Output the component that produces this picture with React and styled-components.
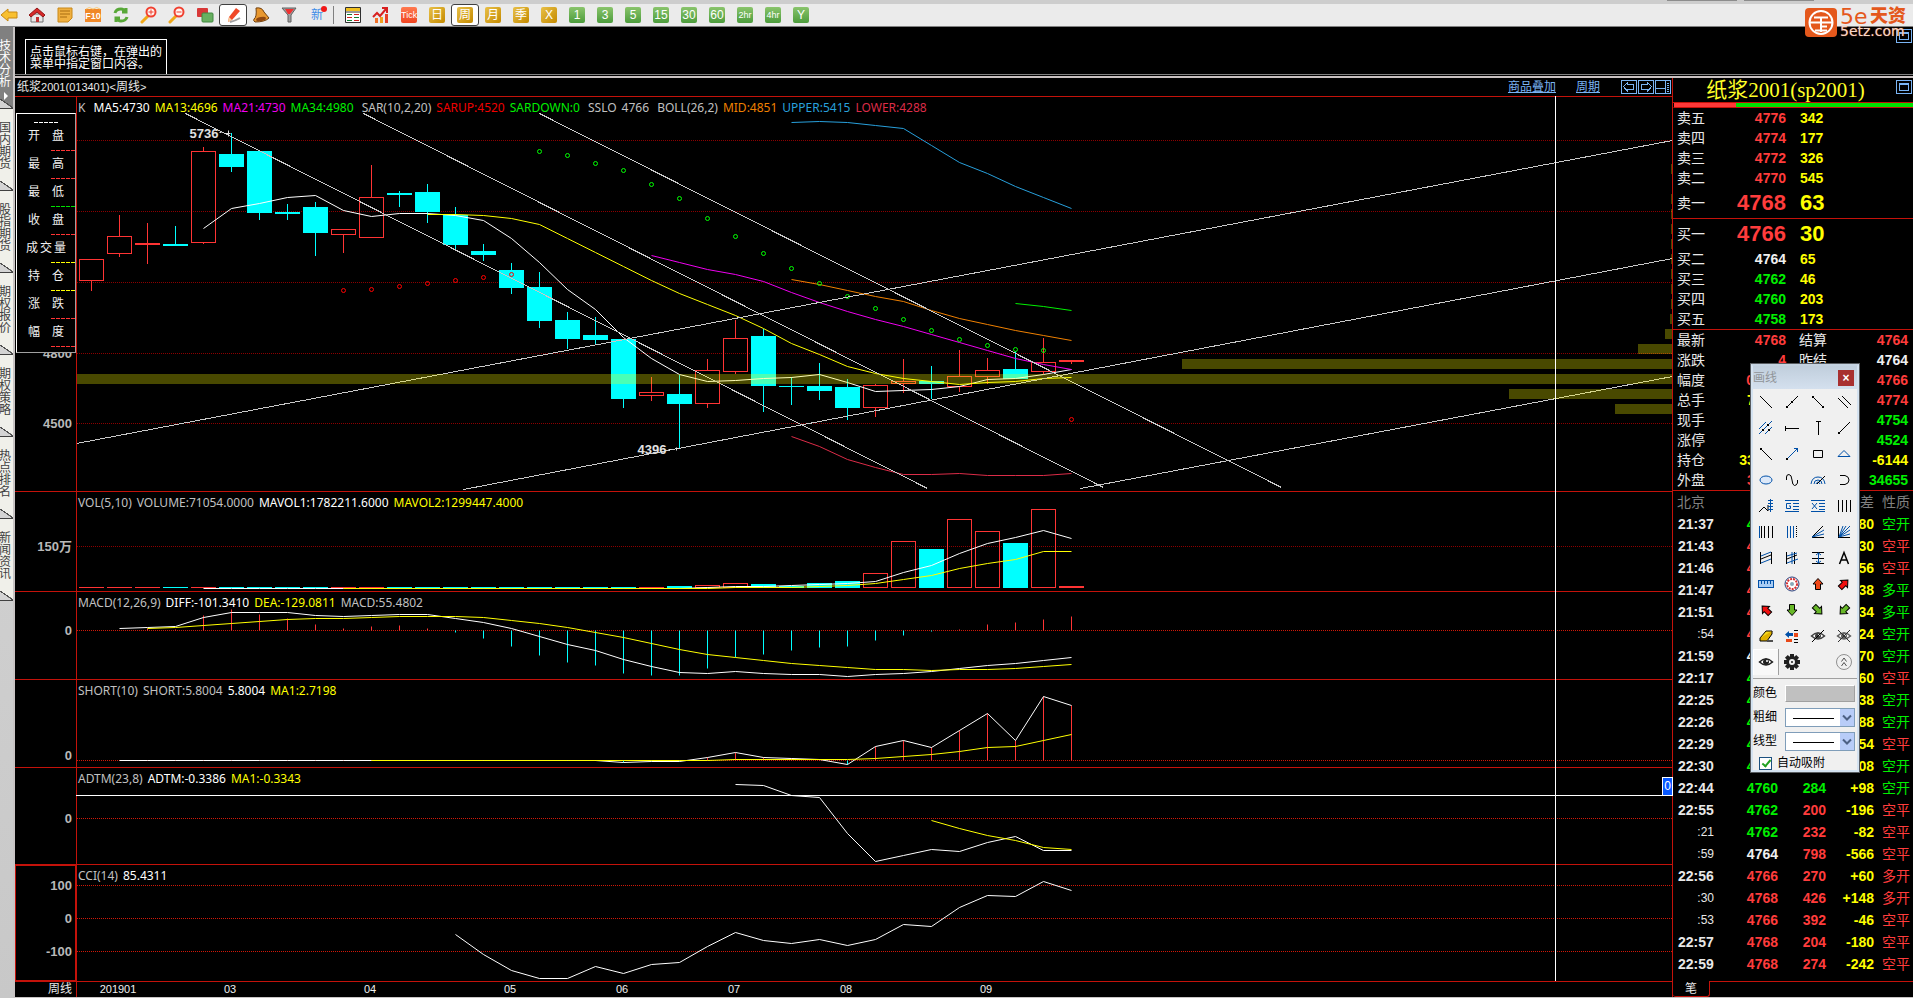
import React from 'react';
import styled, { createGlobalStyle, css } from 'styled-components';

const RED = '#c4120a';
const UP = '#ff3434';
const DOWN = '#00ffff';
const SANS = '"Liberation Sans", "Noto Sans CJK SC", sans-serif';
const LEGEND = '"Noto Sans", "Noto Sans CJK SC", sans-serif';

const Global = createGlobalStyle`
  * { box-sizing: border-box; }
  body { margin: 0; background: #000; color: #e8e8e8; font: 12px/12px ${SANS}; overflow: hidden; }
  button { font: inherit; color: inherit; border: 0; padding: 0; background: none; }
  table { border-collapse: collapse; border-spacing: 0; }
  td, th { padding: 0; font-weight: inherit; text-align: left; }
  svg { display: block; }
`;

/* ---------- frame ---------- */
const Page = styled.div`
  position: relative;
  display: flex;
  flex-direction: column;
  min-height: 100vh;
`;
const Strip = styled.div`
  height: 4px;
  display: flex;
  justify-content: flex-end;
  gap: 7px;
  padding-right: 99px;
  background: #cdcdcd;
`;
const StripTab = styled.i`
  width: 70px;
  height: 1px;
  background: #8c8c8c;
`;
const Toolbar = styled.div`
  display: flex;
  align-items: center;
  height: 23px;
  background: #ebebeb;
  border-bottom: 1px solid #808080;
`;
const Tools = styled.div`
  display: flex;
  align-items: center;
  margin-left: -5px;
`;
const Tool = styled.button`
  display: flex;
  align-items: center;
  justify-content: center;
  width: 28px;
  height: 22px;
  border-radius: 3px;
  ${p => p.$on && css`background: #fff; border: 1px solid #404040;`}
`;
const Divider = styled.i`
  width: 1px;
  height: 18px;
  margin: 0 5px 0 2px;
  background: #808080;
`;
const tones = {
  gold: 'linear-gradient(135deg, #e8c048, #c48a00)',
  green: 'linear-gradient(#8ac46c, #4c9c3c)',
  red: 'linear-gradient(#ff7a50, #f04420)',
};
const Chip = styled.span`
  width: 16px;
  height: 16px;
  border-radius: 2px;
  background: ${p => tones[p.$tone]};
  color: #fff;
  font-size: ${p => (p.$small ? 9 : 12)}px;
  line-height: 16px;
  text-align: center;
  overflow: hidden;
`;
const NewMark = styled.span`
  position: relative;
  color: #3c8ce8;
  font-size: 12px;
  line-height: 16px;
  &::after {
    content: '';
    position: absolute;
    top: -1px;
    right: -4px;
    width: 6px;
    height: 6px;
    border-radius: 50%;
    background: #f01818;
  }
`;

const Logo = styled.div`
  position: absolute;
  top: 8px;
  right: 6px;
  display: flex;
  gap: 3px;
  z-index: 2;
`;
const LogoText = styled.div`
  width: 67px;
  display: flex;
  flex-direction: column;
`;
const LogoTop = styled.div`
  display: flex;
  align-items: center;
  color: #e4581c;
  font-size: 18px;
  font-weight: 900;
  line-height: 17px;
  white-space: nowrap;
`;
const LogoFive = styled.span`
  width: 30px;
  font: 22px/17px "DejaVu Sans", sans-serif;
`;
const LogoUrl = styled.div`
  font: 14px/13px "DejaVu Sans", sans-serif;
  color: #f0d8cc;
  text-shadow: 0 0 1px #e4581c;
`;

const Body = styled.div`
  flex: 1;
  display: flex;
  min-width: 0;
`;
const Rail = styled.nav`
  width: 15px;
  border-right: 2px solid #c8c4c4;
  background: linear-gradient(#d8d8d8, #c8c8c8);
`;
const RailTab = styled.button`
  position: relative;
  display: flex;
  flex-direction: column;
  width: 13px;
  height: 82px;
  padding-top: 13px;
  overflow: hidden;
  background: ${p => (p.$on ? '#808080' : '#f0f0ea')};
  color: ${p => (p.$on ? '#fff' : '#404040')};
  &::after {
    content: '';
    position: absolute;
    left: 0;
    right: 0;
    bottom: 0;
    height: 9px;
    border-bottom: 1px solid #404040;
    background: linear-gradient(to top right, #d4d4d4 46%, #505050 47%, #505050 54%, transparent 55%);
  }
`;
const RailText = styled.span`
  width: 12px;
  margin-left: -1px;
  line-height: 12px;
  word-break: break-all;
`;
const RailArrow = styled.i`
  margin: 4px 0 0 4px;
  border: 4px solid transparent;
  border-left-color: #fff;
  border-right: 0;
`;

const Main = styled.main`
  flex: 1;
  min-width: 0;
  display: flex;
  flex-direction: column;
  border-bottom: 1px solid #c8c4c4;
`;
const HintBar = styled.div`
  display: flex;
  align-items: flex-end;
  justify-content: space-between;
  height: 48px;
  padding-left: 10px;
  border-bottom: 1px solid #808080;
`;
const Hint = styled.p`
  margin: 0;
  width: 142px;
  height: 35px;
  padding: 6px 4px 0;
  border: 1px solid #fff;
  border-bottom: 0;
  color: #fff;
  line-height: 12px;
`;
const CornerButton = styled.button`
  align-self: flex-start;
  margin: 2px 1px 0 0;
`;
const Ridge = styled.div`
  height: 3px;
  border-top: 1px solid #000;
  background: #c8c0c0;
`;
const Work = styled.div`
  flex: 1;
  display: flex;
  min-width: 0;
`;

/* ---------- chart column ---------- */
const ChartColumn = styled.section`
  position: relative;
  flex: 1;
  min-width: 0;
`;
const ChartHead = styled.header`
  display: flex;
  align-items: center;
  height: 19px;
  padding: 0 1px 1px 2px;
  border-bottom: 1px solid ${RED};
`;
const ChartName = styled.h1`
  flex: 1;
  margin: 0;
  font-size: 12px;
  font-weight: 400;
`;
const Small = styled.span`
  font-size: 11px;
`;
const HeadLink = styled.a`
  margin-right: 20px;
  color: #7ab4f4;
  line-height: 14px;
  text-decoration: underline;
  text-underline-offset: 1px;
`;
const HeadIcons = styled.div`
  display: flex;
  gap: 1px;
  margin-left: 1px;
`;
const Panel = styled.div`
  display: flex;
  border-bottom: 1px solid ${RED};
`;
const Axis = styled.div`
  position: relative;
  flex: none;
  width: 62px;
  border-right: 1px solid ${RED};
  ${p => p.$boxed && css`box-shadow: inset 0 0 0 1px ${RED};`}
`;
const Plot = styled.div`
  flex: 1;
  min-width: 0;
  display: grid;
  & > * { grid-area: 1 / 1; }
`;
const Legend = styled.div`
  display: flex;
  gap: 5px;
  height: 20px;
  padding: 3px 0 0 1px;
  font: 12px/15px ${LEGEND};
  white-space: pre;
`;
const Item = styled.span`
  color: ${p => p.$c || '#c0c0c0'};
`;
const Crosshair = styled.i`
  position: absolute;
  background: #fff;
  ${p => (p.$vertical
    ? css`top: 18px; bottom: 16px; right: 116px; width: 1px;`
    : css`left: 61px; right: 0; bottom: 201px; height: 1px;`)}
`;
const Flag = styled.span`
  position: absolute;
  right: -1px;
  bottom: 201px;
  width: 11px;
  height: 19px;
  border: 1px solid #fff;
  background: #0858ff;
  color: #fff;
  line-height: 17px;
  text-align: center;
`;
const Readout = styled.div`
  position: absolute;
  top: 16px;
  left: 1px;
  width: 60px;
  height: 240px;
  padding-top: 8px;
  border: 1px solid #fff;
  border-right-color: #a0a0a0;
  border-bottom-color: #a0a0a0;
  background: #000;
`;
const Dashes = styled.i`
  display: block;
  width: 24px;
  height: 1px;
  margin-left: ${p => (p.$first ? 17 : 34)}px;
  background: repeating-linear-gradient(90deg, ${p => p.$c} 0 4px, #000 4px 5px);
`;
const ReadRow = styled.div`
  height: 27px;
  padding: ${p => (p.$wide ? '7px 9px 0' : '7px 11px 0')};
  display: flex;
  justify-content: space-between;
  color: #f0f0f0;
`;

/* ---------- quote column ---------- */
const Side = styled.aside`
  flex: none;
  width: 241px;
  border-left: 1px solid ${RED};
  color: #e8e8e8;
  font-size: 14px;
`;
const SideHead = styled.header`
  display: flex;
  height: 25px;
  border-bottom: 1px solid ${RED};
  justify-content: flex-end;
`;
const SideTitle = styled.h2`
  flex: 1;
  margin: 0;
  padding-left: 2px;
  color: #ffff28;
  font: 400 21px/25px "Liberation Serif", "Noto Sans CJK SC", serif;
  text-align: center;
  white-space: nowrap;
`;
const Ratio = styled.div`
  height: 5px;
  margin: 0;
  border-left: 1px solid #000;
  border-bottom: 1px solid ${RED};
  background: linear-gradient(90deg, #ff3838 26%, #00e000 26%);
`;
const Book = styled.table`
  width: 100%;
  table-layout: fixed;
  border-bottom: 1px solid ${RED};
  border-collapse: separate;
`;
const BookRow = styled.tr`
  height: ${p => (p.$big ? 30 : 20)}px;
  td { font-size: ${p => (p.$big ? 22 : 14)}px; }
`;
const Label = styled.th`
  width: ${p => p.$w}px;
  padding-left: 4px;
  font-weight: 400;
  line-height: 18px;
  color: ${p => (p.$dim ? '#808080' : '#e8e8e8')};
`;
const Num = styled.td`
  width: ${p => p.$w}px;
  padding-left: ${p => p.$pad || 0}px;
  color: ${p => p.$c};
  font-weight: 700;
  line-height: 18px;
  text-align: ${p => (p.$left ? 'left' : 'right')};
`;
const TickRow = styled.tr`
  height: 22px;
`;
const Time = styled.td`
  width: 41px;
  padding-left: ${p => (p.$minor ? 0 : 5)}px;
  font-size: ${p => (p.$minor ? 12 : 14)}px;
  font-weight: ${p => (p.$minor ? 400 : 700)};
  text-align: ${p => (p.$minor ? 'right' : 'left')};
`;
const Nature = styled.td`
  padding-left: 8px;
  color: ${p => p.$c};
  line-height: 18px;
`;
const SideFoot = styled.div`
  display: flex;
  height: 15px;
  margin-top: 6px;
`;
const FootTab = styled.button`
  width: 37px;
  height: 16px;
  border: 1px solid ${RED};
  border-top: 0;
  border-left: 0;
  border-radius: 0 0 3px 3px;
  font-size: 12px;
`;
const FootRest = styled.i`
  flex: 1;
  border-top: 1px solid ${RED};
`;

/* ---------- drawing palette window ---------- */
const Palette = styled.div`
  position: absolute;
  top: 363px;
  right: 53px;
  width: 110px;
  z-index: 3;
  border: 1px solid #585c60;
  color: #000;
`;
const PaletteInner = styled.div`
  border: 2px solid #d4e2f0;
  border-top-color: #c4d2e0;
  background: #f0f0f0;
`;
const PaletteTitle = styled.div`
  display: flex;
  align-items: center;
  justify-content: space-between;
  height: 23px;
  padding-right: 3px;
  background: linear-gradient(#c0cedc, #d4e0ee);
  color: #909498;
`;
const Close = styled.button`
  width: 16px;
  height: 16px;
  background: #a83030;
  color: #fff;
  font-size: 12px;
  font-weight: 700;
  line-height: 14px;
`;
const PaletteGrid = styled.div`
  display: grid;
  grid-template-columns: repeat(4, 26px);
  grid-auto-rows: 26px;
`;
const PaletteCell = styled.button`
  display: flex;
  align-items: center;
  justify-content: center;
  ${p => p.$on && css`box-shadow: inset -1px 0 #a0a0a0, inset 1px 1px #fff; background: #f8f8f8;`}
`;
const Settings = styled.div`
  margin-top: 3px;
  padding-top: 2px;
  border-top: 1px solid #a0a0a0;
`;
const Setting = styled.label`
  display: flex;
  align-items: center;
  justify-content: space-between;
  height: 24px;
  padding-right: 2px;
`;
const Swatch = styled.button`
  width: 70px;
  height: 17px;
  border: 1px solid #a0a0a0;
  border-top-color: #fff;
  border-left-color: #fff;
  background: #c0c0c0;
`;
const LineSelect = styled.select`
  appearance: none;
  display: block;
  width: 70px;
  height: 19px;
  border: 1px solid #7f9db9;
  border-radius: 0;
  background:
    linear-gradient(#000, #000) 7px 9px / 41px 1px no-repeat,
    linear-gradient(90deg, #fff 54px, #b8ccf8 54px);
`;
const SelectBox = styled.span`
  position: relative;
  display: block;
  svg { position: absolute; right: 3px; top: 6px; pointer-events: none; }
`;
const Snap = styled.label`
  display: flex;
  align-items: center;
  gap: 5px;
  height: 17px;
  padding: 3px 0 0 6px;
`;
const Check = styled.input`
  appearance: none;
  width: 13px;
  height: 13px;
  margin: 0;
  border: 1px solid #1c5180;
  background: #fff;
  &:checked::after {
    content: '';
    display: block;
    width: 3px;
    height: 7px;
    margin: 0 0 0 4px;
    border: solid #21a121;
    border-width: 0 2px 2px 0;
    transform: rotate(40deg);
  }
`;

/* ---------- series ---------- */
const X0 = 91;
const STEP = 28;
const xAt = i => X0 + STEP * i;
const line = (start, ys) => ys.map((y, i) => `${xAt(start + i)},${y}`).join(' ');

// high, body top, body bottom, low, rising
const CANDLES = [
  [259, 259, 280, 290, 1], [214, 236, 253, 256, 1], [222, 243, 244, 263, 1], [225, 244, 245, 245, 0],
  [146, 151, 242, 243, 1], [132, 154, 166, 171, 0], [151, 151, 212, 219, 0], [203, 212, 213, 219, 0],
  [201, 207, 232, 255, 0], [228, 229, 234, 252, 1], [164, 197, 237, 237, 1], [190, 193, 194, 206, 0],
  [183, 192, 211, 222, 0], [206, 215, 244, 248, 0], [243, 251, 254, 260, 0], [262, 270, 287, 293, 0],
  [271, 287, 320, 327, 0], [311, 320, 338, 348, 0], [316, 335, 339, 344, 0], [339, 339, 398, 407, 0],
  [376, 392, 395, 400, 1], [374, 394, 403, 447, 0], [358, 370, 403, 407, 1], [319, 338, 371, 373, 1],
  [328, 336, 385, 411, 0], [376, 386, 386, 404, 0], [362, 386, 390, 399, 0], [378, 387, 407, 419, 0],
  [383, 385, 407, 416, 1], [358, 381, 383, 392, 1], [365, 381, 383, 398, 0], [349, 376, 386, 391, 1],
  [357, 370, 376, 383, 1], [350, 369, 378, 378, 0], [337, 362, 371, 373, 1], [359, 360, 361, 363, 1],
];
const MA5 = line(4, [228, 208, 203, 197, 195, 210, 216, 213, 213, 215, 220, 238, 262, 289, 309, 337, 358, 374, 381, 380, 378, 377, 374, 382, 391, 390, 389, 386, 379, 378, 374, 369]);
const MA13 = line(12, [214, 214, 215, 218, 224, 238, 252, 266, 280, 293, 304, 315, 328, 343, 354, 366, 373, 378, 381, 384, 382, 381, 378, 377]);
const MA21 = line(20, [255, 262, 269, 274, 281, 292, 302, 311, 319, 326, 334, 342, 350, 358, 364, 369]);
const MA34 = line(33, [303, 306, 310]);
const UPPER = line(25, [122, 121, 122, 125, 128, 145, 162, 173, 186, 197, 208]);
const MID = line(25, [279, 284, 290, 296, 301, 310, 318, 324, 330, 335, 340]);
const LOWER = line(25, [436, 446, 459, 467, 474, 474, 473, 475, 475, 475, 473]);
const SAR_UP = [290, 289, 286, 283, 280, 277, 274];
const SAR_DOWN = [151, 155, 163, 170, 184, 198, 218, 236, 253, 268, 283, 296, 308, 319, 330, 339, 345, 349, 350];
const TRENDS = [
  [185, 113, 927, 488], [363, 113, 1103, 487], [539, 113, 1281, 487],
  [76, 443, 1672, 140], [463, 489, 1672, 258], [1080, 488, 1672, 376],
];
// top edge, length measured from the right border
const PROFILE = [
  [164, 1], [194, 1], [209, 1], [224, 1], [239, 1], [254, 1], [269, 1], [284, 1], [299, 1],
  [314, 2], [329, 7], [344, 34], [359, 490], [389, 163], [404, 57],
];
const VOL_TOP = { 21: 586, 22: 585, 23: 583, 24: 584, 25: 586, 26: 583, 27: 581, 28: 573, 29: 541, 30: 549, 31: 519, 32: 531, 33: 543, 34: 509, 35: 586 };
const flat = (n, y) => Array(n).fill(y);
const MAVOL1 = line(4, [...flat(18, 588), 587, 586, 586, 585, 584, 583, 581, 572, 565, 553, 543, 537, 530, 538]);
const MAVOL2 = line(9, [...flat(14, 588), 587, 587, 587, 586, 585, 583, 579, 575, 568, 563, 559, 551, 551]);
const DIFF = line(1, [628, 627, 626, 617, 612, 612, 612, 615, 616, 615, 614, 614, 618, 622, 628, 636, 644, 650, 659, 666, 672, 673, 671, 673, 674, 674, 676, 674, 673, 671, 668, 665, 663, 660, 657]);
const DEA = line(2, [628, 627, 625, 623, 621, 619, 618, 618, 617, 616, 616, 616, 617, 620, 623, 627, 632, 637, 643, 649, 654, 657, 660, 663, 665, 667, 669, 669, 670, 669, 669, 668, 666, 664]);
const MACD = [628, 629, 615, 609, 614, 618, 624, 628, 626, 625, 628, 632, 638, 646, 655, 662, 665, 673, 675, 675, 668, 657, 654, 650, 647, 646, 640, 635, 631, 629, 624, 622, 619, 616];
const SHORT_Y = [...flat(18, 760), 762, 761, 761, 757, 752, 757, 758, 759, 764, 746, 740, 747, 730, 713, 740, 696, 705];
const SHORT_MA = line(10, [...flat(13, 760), 759, 759, 759, 759, 759, 758, 756, 754, 751, 747, 746, 740, 734]);
const ADTM = line(23, [784, 785, 795, 797, 833, 861, 855, 849, 851, 842, 836, 850, 850]);
const ADTM_MA = line(30, [820, 828, 835, 840, 847, 849]);
const CCI = line(13, [934, 954, 970, 978, 978, 966, 973, 964, 962, 946, 932, 940, 943, 939, 945, 939, 924, 926, 907, 895, 896, 881, 890]);
const MONTHS = [['201901', 118], ['03', 230], ['04', 370], ['05', 510], ['06', 622], ['07', 734], ['08', 846], ['09', 986]];

const PLOT_LEFT = 77;

const Line = ({ points, c }) => <polyline points={points} fill="none" stroke={c} strokeWidth="1" />;
const Grid = ({ ys, top, c = '#8c0000' }) => ys.map(y => (
  <line key={y} x1="0" x2="100%" y1={y - top + 0.5} y2={y - top + 0.5} stroke={c} strokeDasharray="1 1" shapeRendering="crispEdges" />
));

function ChartPanel({ top, height, ticks = [], boxed, grid, gridColor, legend, under, children, readout }) {
  return (
    <Panel>
      <Axis $boxed={boxed}>
        <svg width="61" height={height}>
          {ticks.map(([t, y]) => (
            <text key={t} x="57" y={y - top + 5} textAnchor="end" fontSize="13" fontWeight="700" fill="#b8b8b8">{t}</text>
          ))}
        </svg>
        {readout}
      </Axis>
      <Plot>
        <svg width="100%" height={height}>
          <Grid ys={grid} top={top} c={gridColor} />
          <g transform={`translate(${0.5 - PLOT_LEFT} ${0.5 - top})`}>{children}</g>
          {under}
        </svg>
        <Legend>{legend.map(([t, c], i) => <Item key={i} $c={c}>{t}</Item>)}</Legend>
      </Plot>
    </Panel>
  );
}

const bodyFor = (i, y1, y2, up) => (
  <rect x={xAt(i) - 12} y={y1} width="24" height={y2 - y1 || 0.01} stroke={up ? UP : DOWN} fill={up ? (y2 - y1 < 2 ? UP : 'none') : DOWN} />
);

function Candles() {
  return (
    <g shapeRendering="crispEdges">
      {CANDLES.map(([h, t, b, l, up], i) => (
        <g key={i}>
          <path d={up && b - t > 1 ? `M${xAt(i)} ${h}V${t}M${xAt(i)} ${b}V${l}` : `M${xAt(i)} ${h}V${l}`} stroke={up ? UP : DOWN} />
          {bodyFor(i, t, b, up)}
        </g>
      ))}
    </g>
  );
}

const READ_ROWS = [
  ['开盘', UP], ['最高', UP], ['最低', '#00e000'], ['收盘', UP],
  ['成交量', '#ffff00'], ['持仓', '#ffff00'], ['涨跌', UP], ['幅度', UP],
];

function PriceReadout() {
  return (
    <Readout>
      <Dashes $first $c="#fff" />
      {READ_ROWS.map(([t, c]) => (
        <React.Fragment key={t}>
          <ReadRow $wide={t.length > 2}>{[...t].map(ch => <span key={ch}>{ch}</span>)}</ReadRow>
          <Dashes $c={c} />
        </React.Fragment>
      ))}
    </Readout>
  );
}

const K_LEGEND = [
  ['K '], ['MA5:4730', '#fff'], ['MA13:4696', '#ffff00'], ['MA21:4730', '#f000f0'], ['MA34:4980', '#00f000'],
  [' SAR(10,2,20)'], ['SARUP:4520', '#f00000'], ['SARDOWN:0', '#00f000'], [' SSLO'], ['4766'],
  [' BOLL(26,2)'], ['MID:4851', '#f08000'], ['UPPER:5415', '#28a0dc'], ['LOWER:4288', '#dc2c48'],
];

function HeadIcon({ d, label }) {
  return (
    <button aria-label={label}>
      <svg width="16" height="14" fill="none" stroke="#7ab4f4" shapeRendering="crispEdges">
        <path d={`M.5.5h15v13h-15z${d}`} />
      </svg>
    </button>
  );
}

function Charts() {
  return (
    <ChartColumn>
      <ChartHead>
        <ChartName>纸浆<Small>2001(013401)&lt;</Small>周线<Small>&gt;</Small></ChartName>
        <HeadLink href="#overlay">商品叠加</HeadLink>
        <HeadLink href="#period">周期</HeadLink>
        <HeadIcons>
          <HeadIcon label="左移" d="M2.500 6.500l4-4v2h6v5h-6v2l-4-5" />
          <HeadIcon label="右移" d="M13.500 6.500l-4-4v2h-6v5h6v2l4-5" />
          <HeadIcon label="布局" d="M10.500 1v12M1 8.500h9M12 3.500h2M12 5.500h2M12 7.500h2M12 9.500h2M12 11.500h2" />
        </HeadIcons>
      </ChartHead>

      <ChartPanel
        top={97} height={394} grid={[140, 211, 282, 353, 423]}
        ticks={[['4800', 353], ['4500', 423]]}
        legend={K_LEGEND} readout={<PriceReadout />}
        under={(
          <g fill="#ffff00" fillOpacity=".285">
            <rect x="0" y={374 - 97} width="100%" height="10" />
            <svg x="100%" overflow="visible">
              {PROFILE.map(([y, w]) => <rect key={y} x={-w} y={y - 97} width={w} height="10" />)}
            </svg>
          </g>
        )}
      >
        <Candles />
        <Line points={MA5} c="#fff" />
        <Line points={MA13} c="#ffff00" />
        <Line points={MA21} c="#f000f0" />
        <Line points={MA34} c="#00f000" />
        <Line points={UPPER} c="#28a0dc" />
        <Line points={MID} c="#f08000" />
        <Line points={LOWER} c="#dc2c48" />
        {SAR_UP.map((y, i) => <circle key={i} cx={xAt(9 + i)} cy={y} r="2" fill="none" stroke="#ff0000" />)}
        <circle cx={xAt(35)} cy="419" r="2" fill="none" stroke="#ff0000" />
        {SAR_DOWN.map((y, i) => <circle key={i} cx={xAt(16 + i)} cy={y} r="2" fill="none" stroke="#00ff00" />)}
        <g stroke="#c8c8c8" shapeRendering="crispEdges">
          {TRENDS.map(([x1, y1, x2, y2]) => <line key={x1} x1={x1} y1={y1} x2={x2} y2={y2} />)}
        </g>
        <g fill="#e0e0e0" fontSize="13" fontWeight="700">
          <text x="189" y="137">5736</text>
          <text x="637" y="453">4396</text>
        </g>
        <path d="M219 132h2M224 133h6M228 130v6M668 449h3M675 448h4M676 447v3" stroke="#e0e0e0" />
      </ChartPanel>

      <ChartPanel
        top={492} height={99} grid={[546]} ticks={[['150万', 546]]}
        legend={[['VOL(5,10)'], ['VOLUME:71054.0000'], ['MAVOL1:1782211.6000', '#fff'], ['MAVOL2:1299447.4000', '#ffff00']]}
      >
        <g shapeRendering="crispEdges">
          {CANDLES.map((c, i) => <React.Fragment key={i}>{bodyFor(i, VOL_TOP[i] || 587, 587, c[4])}</React.Fragment>)}
        </g>
        <Line points={MAVOL1} c="#fff" />
        <Line points={MAVOL2} c="#ffff00" />
      </ChartPanel>

      <ChartPanel
        top={592} height={87} grid={[630]} gridColor="#d01808" ticks={[['0', 630]]}
        legend={[['MACD(12,26,9)'], ['DIFF:-101.3410', '#fff'], ['DEA:-129.0811', '#ffff00'], ['MACD:55.4802']]}
      >
        {MACD.map((y, i) => (
          <line key={i} x1={xAt(i + 2)} x2={xAt(i + 2)} y1="630" y2={y} stroke={y < 630 ? UP : DOWN} />
        ))}
        <Line points={DIFF} c="#fff" />
        <Line points={DEA} c="#ffff00" />
      </ChartPanel>

      <ChartPanel
        top={680} height={87} grid={[760]} gridColor="#d01808" ticks={[['0', 755]]}
        legend={[['SHORT(10)'], ['SHORT:5.8004'], ['5.8004', '#fff'], ['MA1:2.7198', '#ffff00']]}
      >
        {SHORT_Y.map((y, i) => y !== 760 && (
          <line key={i} x1={xAt(i + 1)} x2={xAt(i + 1)} y1="760" y2={y} stroke={y < 760 ? UP : DOWN} />
        ))}
        <Line points={line(1, SHORT_Y)} c="#fff" />
        <Line points={SHORT_MA} c="#ffff00" />
      </ChartPanel>

      <ChartPanel
        top={768} height={96} grid={[818]} gridColor="#d01808" ticks={[['0', 818]]}
        legend={[['ADTM(23,8)'], ['ADTM:-0.3386', '#fff'], ['MA1:-0.3343', '#ffff00']]}
      >
        <Line points={ADTM} c="#fff" />
        <Line points={ADTM_MA} c="#ffff00" />
      </ChartPanel>

      <ChartPanel
        top={865} height={116} boxed grid={[885, 918, 951]} gridColor="#d01808"
        ticks={[['100', 885], ['0', 918], ['-100', 951]]}
        legend={[['CCI(14)'], ['85.4311', '#fff']]}
      >
        <Line points={CCI} c="#fff" />
      </ChartPanel>

      <DateAxis />
      <Crosshair $vertical />
      <Crosshair />
      <Flag>0</Flag>
    </ChartColumn>
  );
}

const DateRow = styled.div`
  display: flex;
  height: 15px;
`;
const DateUnit = styled.span`
  width: 62px;
  padding-right: 4px;
  border-right: 1px solid ${RED};
  line-height: 15px;
  text-align: right;
`;
const DateScale = styled.svg`
  flex: 1;
  min-width: 0;
  height: 15px;
`;
function DateAxis() {
  return (
    <DateRow>
      <DateUnit>周线</DateUnit>
      <DateScale fill="#f0f0f0" fontSize="11">
        {MONTHS.map(([t, x]) => <text key={t} x={x - PLOT_LEFT} y="11" textAnchor="middle">{t}</text>)}
      </DateScale>
    </DateRow>
  );
}

/* ---------- quotes ---------- */
const R = '#ff3c3c';
const G = '#00f000';
const Y = '#ffff00';
const W = '#f0f0f0';
const ASKS = [['卖五', '4776', '342', R], ['卖四', '4774', '177', R], ['卖三', '4772', '326', R], ['卖二', '4770', '545', R], ['卖一', '4768', '63', R, 1]];
const BIDS = [['买一', '4766', '30', R, 1], ['买二', '4764', '65', W], ['买三', '4762', '46', G], ['买四', '4760', '203', G], ['买五', '4758', '173', G]];
const STATS = [
  ['最新', '4768', R, '结算', '4764', R], ['涨跌', '4', R, '昨结', '4764', W],
  ['幅度', '0.08%', R, '开盘', '4766', R], ['总手', '71054', Y, '最高', '4774', R],
  ['现手', '274', Y, '最低', '4754', G], ['涨停', '5004', R, '跌停', '4524', G],
  ['持仓', '335678', Y, '仓差', '-6144', Y], ['外盘', '36399', R, '内盘', '34655', G],
];
const TICKS = [
  ['21:37', '4760', G, '', G, '80', '空开', G], ['21:43', '4766', R, '', R, '30', '空平', R],
  ['21:46', '4766', R, '', R, '56', '空平', R], ['21:47', '4766', R, '', R, '38', '多平', G],
  ['21:51', '4766', R, '', R, '34', '多平', G], [':54', '4766', R, '', R, '24', '空开', G],
  ['21:59', '4764', W, '', G, '70', '空开', G], ['22:17', '4762', G, '', R, '60', '空平', R],
  ['22:25', '4760', G, '', G, '38', '空开', G], ['22:26', '4760', G, '', G, '88', '空开', G],
  ['22:29', '4762', G, '', R, '54', '空平', R], ['22:30', '4760', G, '', G, '08', '空开', G],
  ['22:44', '4760', G, '284', G, '+98', '空开', G], ['22:55', '4762', G, '200', R, '-196', '空平', R],
  [':21', '4762', G, '232', R, '-82', '空平', R], [':59', '4764', W, '798', R, '-566', '空平', R],
  ['22:56', '4766', R, '270', R, '+60', '多开', R], [':30', '4768', R, '426', R, '+148', '多开', R],
  [':53', '4766', R, '392', R, '-46', '空平', R], ['22:57', '4768', R, '204', R, '-180', '空平', R],
  ['22:59', '4768', R, '274', R, '-242', '空平', R],
];

function Depth({ rows }) {
  return (
    <Book>
      <tbody>
        {rows.map(([name, price, vol, c, big]) => (
          <BookRow key={name} $big={big}>
            <Label $w={45}>{name}</Label>
            <Num $w={68} $c={c}>{price}</Num>
            <Num $left $pad={14} $c={Y}>{vol}</Num>
          </BookRow>
        ))}
      </tbody>
    </Book>
  );
}

const Caption = styled.th`
  padding-left: ${p => p.$pad || 0}px;
  color: ${p => (p.$dim ? '#808080' : '#e8e8e8')};
  line-height: 18px;
  text-align: ${p => (p.$right ? 'right' : 'left')};
`;
const Inset = styled.span`
  padding-right: 5px;
`;
const TickTable = styled.table`
  width: 100%;
  table-layout: auto;
`;
const WindowGlyph = () => (
  <svg width="16" height="14" fill="none" stroke="#7ab4f4" shapeRendering="crispEdges">
    <path d="M.5.5h15v13h-15zM3.500 3.500h9v7h-9zM3 4.500h10" />
  </svg>
);

function Quotes() {
  return (
    <Side>
      <SideHead>
        <SideTitle>纸浆2001(sp2001)</SideTitle>
        <CornerButton aria-label="最大化"><WindowGlyph /></CornerButton>
      </SideHead>
      <Ratio />
      <Depth rows={ASKS} />
      <Depth rows={BIDS} />
      <Book>
        <tbody>
          {STATS.map(([a, av, ac, b, bv, bc]) => (
            <BookRow key={a}>
              <Label $w={45}>{a}</Label>
              <Num $w={68} $c={ac}>{av}</Num>
              <Caption $pad={13}>{b}</Caption>
              <Num $w={70} $c={bc}><Inset>{bv}</Inset></Num>
            </BookRow>
          ))}
        </tbody>
      </Book>
      <TickTable>
        <thead>
          <TickRow>
            <Label $w={41} $dim>北京</Label>
            <Caption $dim $right>价格</Caption>
            <Caption $dim $right>现手</Caption>
            <Caption $dim $right>仓差</Caption>
            <Caption $dim $pad={8}>性质</Caption>
          </TickRow>
        </thead>
        <tbody>
          {TICKS.map(([t, p, pc, v, vc, d, n, nc]) => (
            <TickRow key={t}>
              <Time $minor={t.length < 5}>{t}</Time>
              <Num $w={64} $c={pc}>{p}</Num>
              <Num $w={48} $c={vc}>{v}</Num>
              <Num $w={48} $c={Y}>{d}</Num>
              <Nature $c={nc}>{n}</Nature>
            </TickRow>
          ))}
        </tbody>
      </TickTable>
      <SideFoot>
        <FootTab>笔</FootTab>
        <FootRest />
      </SideFoot>
    </Side>
  );
}

/* ---------- palette glyphs, 16 px box ---------- */
const B = '#0050a8';
const s = (d, c = '#000') => <path d={d} stroke={c} fill="none" />;
const dot = (x, y) => <rect x={x - 1} y={y - 1} width="2" height="2" fill="#000" />;
const arrow = (deg, c) => (
  <path transform={`rotate(${deg} 8 8)`} d="M8 2.500l5 5.500h-2.500v5.500h-5V8H3z" fill={c} stroke="#000" />
);
const eye = c => (
  <>
    <path d="M1.500 8Q8 1.500 14.500 8Q8 14 1.500 8z" fill="#fff" stroke={c} strokeWidth="1.500" />
    <circle cx="8" cy="8" r="3" fill={c} /><circle cx="9" cy="7" r="1" fill="#fff" />
  </>
);
const gearTeeth = Array.from({ length: 8 }, (_, k) => (
  <rect key={k} x="6" y="0" width="4" height="4" fill="#202020" transform={`rotate(${k * 45} 8 8)`} />
));
const GLYPHS = [
  ['直线', s('M2 2l12 12')],
  ['线段', <>{s('M2 14L14 2')}{dot(8, 8)}{dot(3, 13)}</>],
  ['端点线', <>{s('M3 3l10 10')}{dot(3, 3)}{dot(13, 13)}</>],
  ['平行线', s('M2 4l10 10M6 2l9 9')],
  ['通道线', <>{s('M1 9l7-7M1 14L14 1M7 14l7-7', B)}{dot(10, 5)}{dot(5, 10)}{dot(11, 10)}</>],
  ['水平线', s('M1 8.500h14M1.500 6v5')],
  ['垂直线', s('M8.500 1v14M6 1.500h5')],
  ['射线', <>{s('M3 13L14 2')}{dot(3, 13)}</>],
  ['左射线', <>{s('M3 3l11 11')}{dot(3, 3)}</>],
  ['箭头线', <>{s('M3 13L14 2M10 2.500h3.500V6', B)}{dot(3, 13)}</>],
  ['矩形', s('M3.500 4.500h9v7h-9z')],
  ['三角形', s('M2 10.500h12L8 4.500z', B)],
  ['椭圆', <ellipse cx="8" cy="8" rx="6" ry="4" fill="#dce8f8" stroke={B} />],
  ['正弦', s('M2.500 8V5Q2.500 2.500 5 2.500T8 8t2.500 5.500T13.500 11V8')],
  ['圆弧', <>{s('M1 12Q2 5 8 5t7 7M4 12q0-4 4-4t4 4M6 12q2-4 4 0', B)}{s('M7 12l8-8')}</>],
  ['半圆', s('M4 3.500h5q4 1 4 4.500t-4 4.500H4')],
  ['波浪尺', <>{s('M1 14l5-5 4 4V7')}{s('M12.500 1v13M10 2.500h5M10 5.500h5M10 8.500h5M10 11.500h5', B)}</>],
  ['黄金分割', <>{s('M1 2.500h14M9 5.500h6M9 8.500h6M9 11.500h6M1 13.500h14M7 5.500H2.500v5h4V8H5', B)}</>],
  ['百分比', <>{s('M1 2.500h14M9 5.500h6M9 8.500h6M9 11.500h6M1 13.500h14M2 5l5 6M7 5l-5 6', B)}</>],
  ['周期线', s('M2.500 2v12M6.500 2v12M10.500 2v12M14.500 2v12')],
  ['费波周期', <>{s('M1.500 2v12', B)}{s('M3.500 2v12M6.500 2v12M10.500 2v12M14.500 2v12')}</>],
  ['等周期', <>{s('M3.500 2v12M6.500 2v12M9.500 2v12', B)}<path d="M12.500 2v12" stroke="#000" strokeDasharray="1 1" /></>],
  ['扇形线', <>{s('M2 13.500h12M2 13L13 2')}{s('M2 13l12-7M2 13l12-3', B)}</>],
  ['江恩角', <>{s('M2.500 2v12M2 13.500h12')}{s('M3 13L14 2M3 13L7 2M3 13l11-7M3 13L10 2M3 13l11-3', B)}</>],
  ['回归带', <>{s('M2.500 2v12M13.500 2v12M3 9l10-4')}{s('M3 6l10-4M3 13l10-4', B)}</>],
  ['回归线', <>{s('M2.500 2v12M10.500 2v12M3 9l10-4')}{s('M3 6l10-3M3 13l11-4M8 2v12', B)}</>],
  ['量度', <>{s('M2 2.500h12M2 8.500h12M2 13.500h12')}{s('M8.500 3v10M6 5l2.500-2L11 5M6 11l2.500 2 2.500-2', B)}</>],
  ['文字', <path d="M3.500 14L8 2.500 12.500 14M5 10h6" fill="none" stroke="#000" strokeWidth="1.500" />],
  ['标尺', <><rect x="0.500" y="4.500" width="15" height="7" fill="#a8ccf4" stroke={B} />{s('M3.500 5v3M6.500 5v3M9.500 5v3M12.500 5v3', B)}</>],
  ['罗盘', <><circle cx="8" cy="8" r="7" fill="#fff" stroke="#283c78" /><circle cx="8" cy="8" r="5" fill="none" stroke="#d83030" strokeWidth="2" strokeDasharray="2 1" /><circle cx="8" cy="8" r="2" fill="#88a8b8" /></>],
  ['上箭头', arrow(0, '#f04818')],
  ['右上箭头', arrow(45, '#f01010')],
  ['左上箭头', arrow(-45, '#f01010')],
  ['下箭头', arrow(180, '#68b828')],
  ['右下箭头', arrow(135, '#68b828')],
  ['左下箭头', arrow(225, '#68b828')],
  ['橡皮', <><path d="M2 10l6-7h6l-5 8z" fill="#f8d820" stroke="#000" /><path d="M2 10v3h7l5-7V3" fill="#e0b000" stroke="#000" /><path d="M9 13h6" stroke="#505050" strokeWidth="2" /></>],
  ['管理', <><path d="M1 6.500L5 3v2h4v3H5v2z" fill={B} /><path d="M10 5h4v4h-4zM2 11h6v3H2z" fill="#e84818" />{s('M10 2.500h4M10 11.500h4M10 14.500h4')}</>],
  ['隐藏', <>{eye('#404040')}{s('M2 14L14 2')}</>],
  ['全部隐藏', <>{eye('#606060')}{s('M2 2l12 12M2 14L14 2', '#303030')}</>],
  ['显示', eye('#202020')],
  ['设置', <>{gearTeeth}<circle cx="8" cy="8" r="6" fill="#202020" /><circle cx="8" cy="8" r="2" fill="none" stroke="#f0f0f0" strokeWidth="2" /></>],
  null,
  ['收起', <><circle cx="8" cy="8" r="7.500" fill="none" stroke="#909090" />{s('M5.500 7.500L8 4l2.500 3.500M5.500 12L8 8.500l2.500 3.500', '#505050')}</>],
];

function DrawingPalette() {
  return (
    <Palette role="dialog" aria-label="画线">
      <PaletteInner>
        <PaletteTitle>画线<Close aria-label="关闭">×</Close></PaletteTitle>
        <PaletteGrid>
          {GLYPHS.map((g, i) => (g
            ? <PaletteCell key={i} aria-label={g[0]} $on={g[0] === '显示'}><svg width="16" height="16">{g[1]}</svg></PaletteCell>
            : <span key={i} />))}
        </PaletteGrid>
        <Settings>
          <Setting>颜色<Swatch aria-label="颜色" /></Setting>
          {['粗细', '线型'].map(t => (
            <Setting key={t}>{t}
              <SelectBox>
                <LineSelect aria-label={t} />
                <svg width="10" height="8"><path d="M1 1.500l4 4 4-4" fill="none" stroke="#4d6185" strokeWidth="2" /></svg>
              </SelectBox>
            </Setting>
          ))}
          <Snap><Check type="checkbox" defaultChecked />自动吸附</Snap>
        </Settings>
      </PaletteInner>
    </Palette>
  );
}

/* ---------- toolbar glyphs, 18 px box ---------- */
const lens = sign => (
  <>
    <path d="M2 16l6-6" stroke="#f0a818" strokeWidth="3" strokeLinecap="round" />
    <circle cx="11" cy="6" r="4.500" fill="#fff4f0" stroke="#f04030" strokeWidth="2" />
    <path d={sign} stroke="#f04030" />
  </>
);
const LEFT_TOOLS = [
  ['后退', <path d="M1 9l7-6v3h9v6H8v3z" fill="#f8c030" stroke="#c88810" />],
  ['首页', <><path d="M3 8h12v8H3z" fill="#e8e8e8" stroke="#707070" /><path d="M1 9l8-7 8 7-2 2-6-5-6 5z" fill="#d82828" stroke="#901818" /><path d="M8 11h3v5H8z" fill="#c03030" /></>],
  ['记事', <><path d="M2 2h14v10l-4 4H2z" fill="#f0b040" stroke="#c88818" /><path d="M4 5h10M4 8h10M4 11h7" stroke="#a86c10" /></>],
  ['F10', <><path d="M1 3h16v13H1z" fill="#f08828" /><path d="M2 3q3-3 7 0q4-3 7 0" fill="none" stroke="#f8c878" /><text x="9" y="13" fontSize="9" fontWeight="700" fill="#fff" textAnchor="middle">F10</text></>],
  ['刷新', <path d="M3 7q1-4 6-4 3 0 5 3M15 11q-1 4-6 4-3 0-5-3M14 2v4h-4M4 16v-4h4" fill="none" stroke="#58a838" strokeWidth="3" />],
  ['放大', lens('M8.500 6h5M11 3.500v5')],
  ['缩小', lens('M8.500 6h5')],
  ['叠加', <><rect x="1" y="2" width="11" height="9" rx="1" fill="#d83838" /><rect x="6" y="7" width="11" height="9" rx="1" fill="#68b060" stroke="#408840" /></>],
  ['画线', <><path d="M4 16l1-5L12 2l4 3-8 9z" fill="#f04828" /><path d="M5 11l3 3-4 2z" fill="#f8d0a0" /><path d="M6 16q5-1 10-4" stroke="#a0a0a0" strokeWidth="2" fill="none" /></>, 1],
  ['预警', <><path d="M4 2q6-1 8 4l5 6q-4 4-14 4 -2-1-1-3 3-2 2-11z" fill="#e89830" stroke="#704010" /><ellipse cx="9" cy="13" rx="5" ry="2" fill="#904810" transform="rotate(-12 9 13)" /></>],
  ['筛选', <><path d="M2 2h14l-5 7v7H8V9z" fill="#a0a0a0" stroke="#606060" /><path d="M5 3h9l-4 5H8z" fill="#f03030" /></>],
];
const RIGHT_TOOLS = [
  ['报价', <><path d="M1.500 1.500h15v15h-15z" fill="#fff" stroke="#303030" /><path d="M2 3.500h14" stroke="#f0c020" strokeWidth="3" /><path d="M3 8.500h5M3 14.500h5M10 11.500h5" stroke="#108030" /><path d="M3 11.500h5M10 8.500h5M10 14.500h5" stroke="#d02020" /><path d="M2 6h14" stroke="#303030" /></>],
  ['走势', <><path d="M3 12h3v5H3z" fill="#f07028" /><path d="M8 11h3v6H8z" fill="#f0a020" /><path d="M13 8h3v9h-3z" fill="#e84028" /><path d="M1 11l4-4 3 3 6-7M10 2h5v5" fill="none" stroke="#d82020" strokeWidth="2" /></>],
];
const PERIODS = [
  ['Tick', 'red', 1], ['日', 'gold'], ['周', 'gold', 0, 1], ['月', 'gold'], ['季', 'gold'], ['X', 'gold'],
  ['1', 'green'], ['3', 'green'], ['5', 'green'], ['15', 'green'], ['30', 'green'], ['60', 'green'],
  ['2hr', 'green', 1], ['4hr', 'green', 1], ['Y', 'green'],
];
const IconTool = ([label, g, on]) => (
  <Tool key={label} aria-label={label} $on={on}><svg width="18" height="18">{g}</svg></Tool>
);

const TABS = ['技术分析', '国内期货', '股指期货', '期权报价', '期权策略', '热点排名', '新闻资讯'];

export default function App() {
  return (
    <Page>
      <Global />
      <Strip><StripTab /><StripTab /></Strip>
      <Toolbar>
        <Tools>
          {LEFT_TOOLS.map(IconTool)}
          <Tool><NewMark>新</NewMark></Tool>
          <Divider />
          {RIGHT_TOOLS.map(IconTool)}
          {PERIODS.map(([t, tone, small, on]) => (
            <Tool key={t} $on={on}><Chip $tone={tone} $small={small}>{t}</Chip></Tool>
          ))}
        </Tools>
      </Toolbar>
      <Logo>
        <svg width="32" height="30">
          <rect width="32" height="29" rx="4" fill="#e4581c" />
          <circle cx="16" cy="14.500" r="11.500" fill="none" stroke="#fff" strokeWidth="2" />
          <path d="M9 9.500h14M5 14.500h22M16 10v14M16 18.500h6M10 22.500h12" stroke="#fff" strokeWidth="2" />
        </svg>
        <LogoText>
          <LogoTop><LogoFive>5e</LogoFive>天资</LogoTop>
          <LogoUrl>5etz.com</LogoUrl>
        </LogoText>
      </Logo>
      <Body>
        <Rail>
          {TABS.map((t, i) => (
            <RailTab key={t} $on={i === 0}>
              <RailText>{t}</RailText>
              {i === 0 && <RailArrow />}
            </RailTab>
          ))}
        </Rail>
        <Main>
          <HintBar>
            <Hint>点击鼠标右键，在弹出的菜单中指定窗口内容。</Hint>
            <CornerButton aria-label="还原"><WindowGlyph /></CornerButton>
          </HintBar>
          <Ridge />
          <Work>
            <Charts />
            <Quotes />
          </Work>
        </Main>
      </Body>
      <DrawingPalette />
    </Page>
  );
}
